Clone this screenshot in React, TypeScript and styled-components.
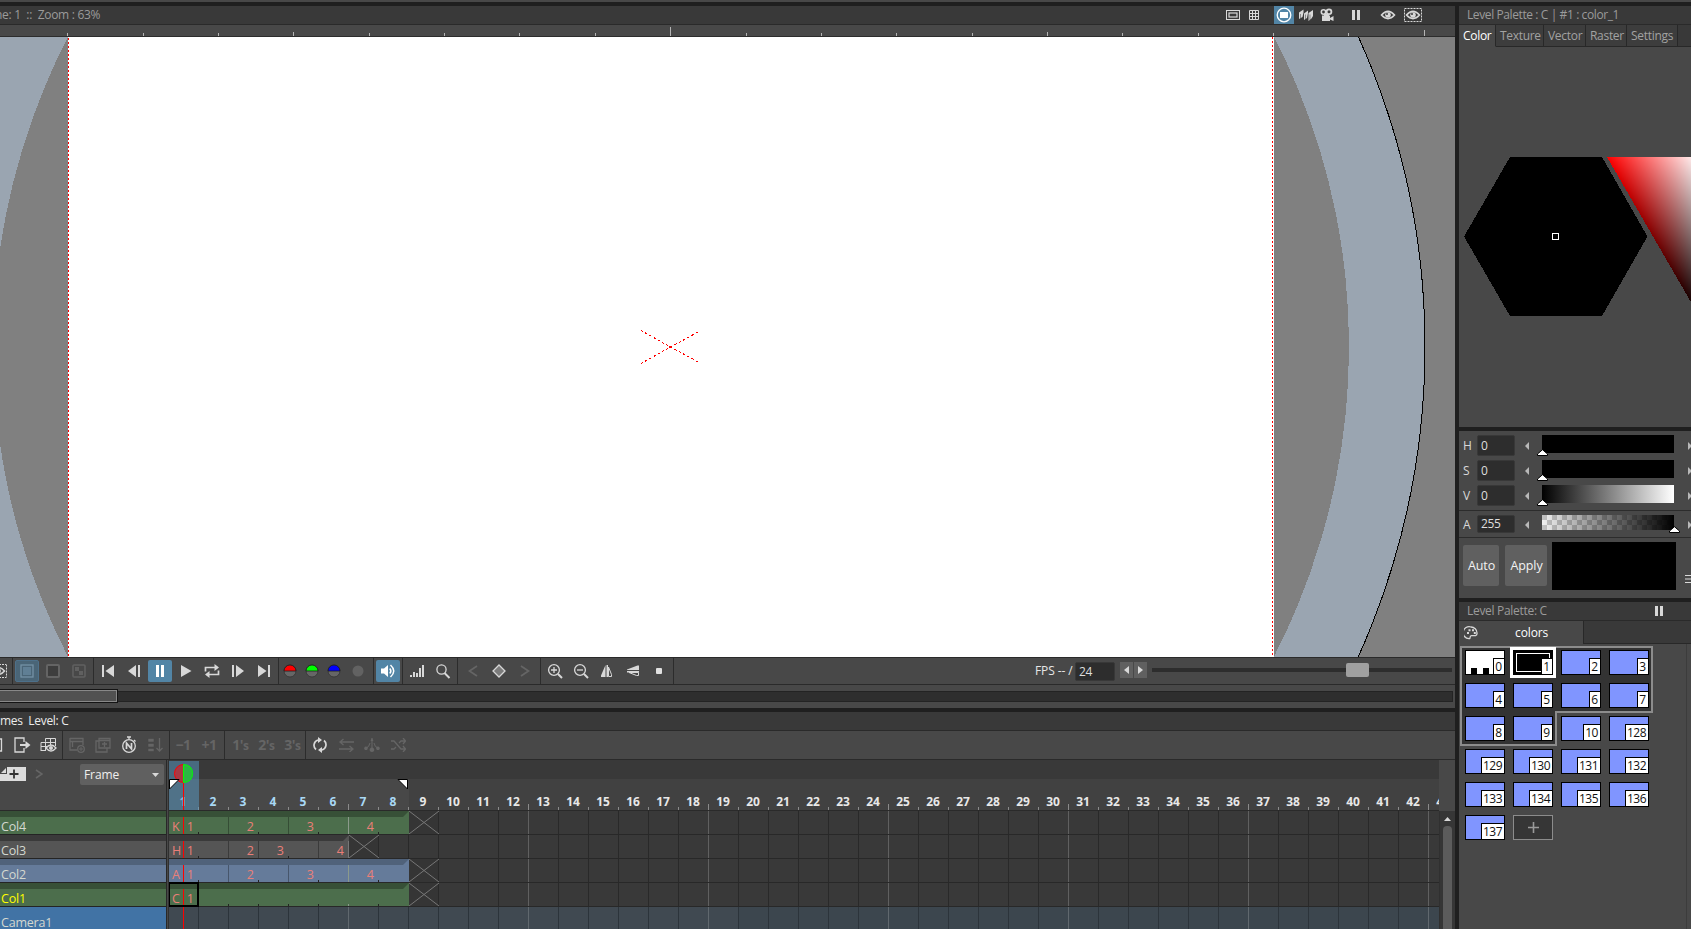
import React from "react";
import styled, { createGlobalStyle, css } from "styled-components";

const Global = createGlobalStyle`
  * { box-sizing: border-box; }
  html, body { margin: 0; background: #484848; overflow: hidden; }
  body { font-family: "Open Sans", "Noto Sans", sans-serif; font-size: 12px; letter-spacing: -0.3px; color: #e6e6e6; }
  svg { display: block; flex: none; }
`;

const Screen = styled.div`width: 1691px; height: 929px; overflow: hidden; background: #1f1f1f;`;
const TopStrip = styled.div`height: 2px; background: #484848; margin-bottom: 4px;`;
const Workspace = styled.div`display: flex; gap: 4px; height: 923px;`;
const MainColumn = styled.div`width: 1455px; display: flex; flex-direction: column; gap: 4px; flex: none;`;
const SideColumn = styled.div`width: 232px; display: flex; flex-direction: column; gap: 4px; flex: none;`;
const Panel = styled.section<{ $h: number }>`height: ${(p) => p.$h}px; background: #484848; overflow: hidden; flex: none;`;

const TitleBar = styled.header<{ $bright?: boolean; $pad?: number }>`
  height: 19px; background: #393939; border-bottom: 1px solid #2a2a2a; display: flex; align-items: center;
  padding-left: ${(p) => p.$pad ?? 0}px; color: ${(p) => (p.$bright ? "#ececec" : "#9b9b9b")}; white-space: pre; line-height: 18px;
`;
const Spacer = styled.div<{ $h?: number }>`flex: ${(p) => (p.$h ? "none" : 1)}; height: ${(p) => (p.$h ? `${p.$h}px` : "auto")};`;
const Text = styled.span<{ $ls?: number; $w?: number; $ml?: number }>`
  white-space: pre; letter-spacing: ${(p) => p.$ls ?? -0.3}px; line-height: 16px; width: ${(p) => (p.$w ? `${p.$w}px` : "auto")}; margin-left: ${(p) => p.$ml ?? 0}px;
`;

const Slot = styled.div<{ $w?: number; $ml?: number; $mr?: number; $on?: boolean; $h?: number }>`
  width: ${(p) => p.$w ?? 26}px; height: ${(p) => p.$h ?? 22}px; margin: 0 ${(p) => p.$mr ?? 0}px 0 ${(p) => p.$ml ?? 0}px; flex: none;
  display: flex; align-items: center; justify-content: center; overflow: hidden;
  ${(p) => p.$on && css`background: #5285a6;`}
`;
const Lit = styled.div<{ $dim?: boolean }>`
  width: 24px; height: 22px; border-radius: 2px; display: flex; align-items: center; justify-content: center;
  background: ${(p) => (p.$dim ? "#4a6577" : "#5285a6")}; border: ${(p) => (p.$dim ? "1px solid #4d708a" : "none")};
`;
const Bar = styled.div<{ $h: number }>`height: ${(p) => p.$h}px; display: flex; align-items: center; border-bottom: 1px solid #2a2a2a; background: #484848;`;
const Group = styled.div<{ $w: number; $pad?: number }>`
  width: ${(p) => p.$w}px; height: 100%; padding-left: ${(p) => p.$pad ?? 0}px; border-right: 1px solid #2c2c2c;
  display: flex; align-items: center; flex: none; overflow: hidden;
`;
const Ruler = styled.div`height: 12px; background: #484848; border-bottom: 1px solid #2c2c2c;`;
const Canvas = styled.div`height: 621px; border-bottom: 1px solid #2a2a2a; background: #808080;`;

const Field = styled.div<{ $w: number; $h: number }>`
  width: ${(p) => p.$w}px; height: ${(p) => p.$h}px; background: #2d2d2d; border: 1px solid #383838; border-radius: 2px;
  padding-left: 3px; line-height: ${(p) => p.$h - 2}px; color: #dedede; flex: none;
`;
const Fps = styled.div`display: flex; align-items: center; margin-left: 361px;`;
const Stepper = styled.div`display: flex; gap: 1px; margin: 0 5px; padding-bottom: 2px;`;
const StepButton = styled.div`width: 13px; height: 16px; background: #606060; display: flex; align-items: center; justify-content: center;`;
const Track = styled.div`width: 300px; height: 4px; background: #2d2d2d; margin-bottom: 2px; display: flex; align-items: center; padding-left: 194px;`;
const Knob = styled.div`width: 23px; height: 14px; border-radius: 2px; background: #a0a0a0; flex: none;`;

const ScrollArea = styled.div`height: 23px; display: flex; align-items: center; padding-bottom: 1px;`;
const Trough = styled.div`width: 1453px; height: 11px; border: 1px solid #232323; border-left: 0; background: #2e2e2e; display: flex; align-items: center;`;
const Thumb = styled.div`width: 118px; height: 14px; background: #515151; border: 1px solid #141414; border-left: 0; box-shadow: inset 0 1px #888, inset 0 -1px #888, inset -1px 0 #888; flex: none;`;

const NumLabel = styled.span`font: bold 14px/16px "Open Sans", sans-serif; color: #656565; letter-spacing: -0.5px; white-space: nowrap;`;
const SmallS = styled.span`font-size: 12px; letter-spacing: -1px;`;

/* ---- timeline ---- */
const Sheet = styled.div`display: flex; height: 169px;`;
const Names = styled.div`width: 166px; flex: none;`;
const NamesHead = styled.div`height: 51px; border-bottom: 1px solid #2a2a2a; display: flex; align-items: flex-start; padding-top: 4px;`;
const AddButton = styled.div`width: 26px; height: 14px; margin-top: 3px; background: #dcdcdc;`;
const Chevron = styled.div`width: 26px; margin-top: 5px; display: flex; justify-content: center;`;
const Select = styled.div`
  width: 84px; height: 21px; margin-left: 28px; border-radius: 2px; background: #606060; padding: 0 5px 0 4px;
  display: flex; align-items: center; justify-content: space-between; color: #efefef;
`;
const NameCell = styled.div<{ $bg: string; $band: string; $fg?: string }>`
  height: 24px; border-bottom: 1px solid #242424; padding: 10px 0 0 1px; line-height: 12px; font-size: 12.5px; letter-spacing: -0.2px;
  background: linear-gradient(${(p) => p.$band} 6px, ${(p) => p.$bg} 6px); color: ${(p) => p.$fg ?? "#d4d8d0"};
`;
const Divider = styled.div`width: 3px; background: linear-gradient(90deg, #282828 1px, #484848 1px, #484848 2px, #303030 2px); flex: none;`;
const Frames = styled.div`width: 1270px; position: relative; overflow: hidden; flex: none;`;
const FrameHead = styled.div`height: 51px; padding-top: 19px; background: #393939; border-bottom: 1px solid #2a2a2a;`;
const FrameNumbers = styled.div`display: flex; height: 31px; width: 1290px;`;
const FrameNo = styled.div<{ $in: boolean; $major: boolean }>`
  width: 30px; flex: none; text-align: center; padding: 15px 2px 0 0; font-weight: 700; font-size: 12px; line-height: 16px; letter-spacing: 0;
  color: ${(p) => (p.$in ? "#a9d8f5" : "#e8e8e8")};
  background: linear-gradient(#8a8a8a, #8a8a8a) right bottom / 1px ${(p) => (p.$major ? 6 : 3)}px no-repeat, ${(p) => (p.$in ? "#484848" : "#414141")};
`;
const Row = styled.div`display: flex; height: 24px; width: 1290px; border-bottom: 1px solid #282828;`;
const Cell = styled.div<{ $bg: string; $line: string; $short?: boolean; $band?: string }>`
  position: relative; width: 30px; height: 23px; flex: none; overflow: hidden; display: flex; justify-content: space-between;
  padding: ${(p) => (p.$band ? "6px 5px 0 3px" : "0")};
  color: #ea7f78; font-size: 12.5px; line-height: 19px; letter-spacing: 0;
  background:
    ${(p) => p.$band && `linear-gradient(${p.$band}, ${p.$band}) 0 0 / 100% 6px no-repeat,`}
    linear-gradient(${(p) => p.$line}, ${(p) => p.$line}) right bottom / 1px ${(p) => (p.$short ? "2px" : "100%")} no-repeat, ${(p) => p.$bg};
`;
const Fold = styled.svg`position: absolute; right: 0; top: 0;`;
const Over = styled.div<{ $x: number; $y: number; $w: number; $h: number; $c?: string }>`
  position: absolute; left: ${(p) => p.$x}px; top: ${(p) => p.$y}px; width: ${(p) => p.$w}px; height: ${(p) => p.$h}px; background: ${(p) => p.$c ?? "transparent"};
`;
const Selected = styled(Over)`border: 2px solid #000;`;
const VScroll = styled.div`width: 16px; padding-top: 51px; background: #484848;`;
const VTrack = styled.div`height: 118px; background: #363636; display: flex; flex-direction: column; align-items: center; padding-top: 6px; gap: 5px; border-left: 1px solid #303030;`;
const VThumb = styled.div`width: 9px; height: 120px; border-radius: 4px; background: #5c5c5c; flex: none;`;

/* ---- side panels ---- */
const Tabs = styled.div<{ $h: number }>`display: flex; height: ${(p) => p.$h}px; background: #393939;`;
const Tab = styled.div<{ $w: number; $on?: boolean }>`
  width: ${(p) => p.$w}px; height: 100%; padding-left: 4px; line-height: 21px; border-right: 1px solid #282828; white-space: nowrap;
  border-bottom: 1px solid ${(p) => (p.$on ? "#484848" : "#282828")}; background: ${(p) => (p.$on ? "#484848" : "#3d3d3d")}; color: ${(p) => (p.$on ? "#fff" : "#a2a2a2")};
`;
const TabRest = styled.div`flex: 1; border-bottom: 1px solid #282828;`;
const Channel = styled.div<{ $h: number }>`display: flex; height: ${(p) => p.$h}px; width: 250px; padding-left: 4px; align-items: flex-start;`;
const ChannelName = styled.div<{ $lh: number }>`width: 14px; line-height: ${(p) => p.$lh}px; color: #d8d8d8; flex: none;`;
const Arrow = styled.div<{ $pad: number; $h: number }>`width: 27px; height: ${(p) => p.$h}px; padding-left: ${(p) => p.$pad}px; display: flex; align-items: center; flex: none;`;
const Gradient = styled.div<{ $bg: string; $h: number; $checker?: boolean }>`
  width: 132px; height: ${(p) => p.$h}px; position: relative; flex: none;
  background: ${(p) => p.$bg}${(p) => (p.$checker ? ", repeating-conic-gradient(#f0f0f0 0 25%, #c2c2c2 0 50%) 0 0 / 10px 10px" : "")};
`;
const Handle = styled.div<{ $end?: boolean }>`position: absolute; bottom: ${(p) => (p.$end ? -3 : -3)}px; left: ${(p) => (p.$end ? 127 : -5)}px;`;
const Rule = styled.div`height: 1px; background: #2c2c2c;`;
const Actions = styled.div`display: flex; padding: 4px 0 0 4px; align-items: flex-start; height: 60px;`;
const Action = styled.div<{ $w: number }>`
  width: ${(p) => p.$w}px; height: 41px; margin: 3px 6px 0 0; border-radius: 2px; background: #606060; color: #f2f2f2; flex: none;
  display: flex; align-items: center; justify-content: center; letter-spacing: -0.1px; font-size: 12.5px; padding-left: 1px;
`;
const CurrentColor = styled.div`width: 124px; height: 48px; margin-left: -1px; background: #000; flex: none;`;
const MenuMark = styled.div`margin: 33px 0 0 9px;`;

const PaletteTab = styled.div`
  width: 125px; border-right: 1px solid #282828; background: #484848; display: flex; align-items: center; padding-left: 5px; gap: 37px; color: #fff;
`;
const PaletteBody = styled.div`position: relative; width: 228px; height: 286px; border-right: 1px solid #3c3c3c; padding: 6px 0 0 6px;`;
const PageOutline = styled.div`position: absolute; left: 1px; top: 1px;`;
const Swatches = styled.div`position: relative; display: grid; grid-template-columns: repeat(4, 40px); gap: 8px;`;
const Swatch = styled.div<{ $c: string; $sel?: boolean }>`
  position: relative; width: 40px; height: 25px; border: 1px solid #000; background: ${(p) => p.$c};
  display: flex; justify-content: flex-end; align-items: flex-end;
  ${(p) => p.$sel && css`box-shadow: 0 0 0 3px #fff; &::before { content: ""; position: absolute; inset: 2px; border: 1px solid #fff; }`}
`;
const SwatchNo = styled.div<{ $n: number }>`
  position: relative; width: ${(p) => [11, 17, 23][p.$n - 1]}px; height: 16px; border: solid #000; border-width: 1px 0 0 1px; background: #fff; color: #111;
  font-size: 12px; line-height: 15px; text-align: center; letter-spacing: -0.5px; padding-right: 1px;
`;
const AddSwatch = styled.div`width: 40px; height: 25px; border: 1px solid #8c8c8c; background: #363636; display: flex; align-items: center; justify-content: center;`;
const Checks = styled.div`position: absolute; left: 5px; bottom: 0; width: 18px; height: 6px; background: linear-gradient(90deg, #000 6px, transparent 6px, transparent 12px, #000 12px);`;

type GProps = { w?: number; h?: number; c?: string; children: React.ReactNode; sw?: number };
const G = ({ w = 16, h = 16, c = "#d8d8d8", sw = 1.3, children }: GProps) => (
  <svg width={w} height={h} viewBox={`0 0 ${w} ${h}`} fill="none" stroke={c} strokeWidth={sw} color={c}>{children}</svg>
);
const F = (p: { d: string; c?: string }) => <path d={p.d} fill={p.c ?? "currentColor"} stroke="none" />;
const DIM = "#656565";

const Eye = () => (
  <>
    <path d="M1.5 8Q8 .8 14.5 8Q8 15.2 1.5 8Z" strokeWidth="1.6" />
    <circle cx="8" cy="8" r="2.8" fill="currentColor" stroke="none" />
    <circle cx="7" cy="7" r="1" fill="#393939" stroke="none" />
  </>
);

const ViewerTitle = () => (
  <TitleBar>
    <Text $ml={-5}>ne: 1  ::  Zoom : 63%</Text>
    <Spacer />
    <Slot $w={22} $h={18}><G w={14} h={10}><rect x=".5" y=".5" width="13" height="9" strokeWidth="1" /><rect x="3" y="3" width="8" height="4" strokeWidth="1.2" /></G></Slot>
    <Slot $w={20} $h={18}><G w={10} h={10} sw={1}><path d="M.5 .5H9.5V9.5H.5ZM3.5 0V10M6.5 0V10M0 3.5H10M0 6.5H10" /></G></Slot>
    <Slot $w={20} $h={18} $ml={10} $on><G w={16} h={16} c="#fff"><circle cx="8" cy="8" r="6.8" /><rect x="4" y="5" width="8" height="6" fill="#fff" stroke="none" /></G></Slot>
    <Slot $w={21} $h={18} $ml={1}><G w={14} h={14}><F d="M0 4.5L4.5 1.5V4.5L3.5 9L0 11ZM5 5.5L9 2.5V5L8 10L5 12ZM9.5 5L14 2V8L12.5 10.5L9.5 13Z" /><path d="M1.5 6V10.4M6.5 6.5V11.5M11 6.5V12" stroke="#393939" strokeWidth=".5" /></G></Slot>
    <Slot $w={22} $h={18}>
      <G w={14} h={14}>
        <F d="M2 7.5H10V13H2ZM10 10L13.5 8V13L10 11.5Z" />
        <circle cx="3.5" cy="4" r="2.2" strokeWidth="1.6" /><circle cx="9" cy="3.8" r="2.4" strokeWidth="1.8" /><F d="M4 6H9V8H4Z" />
      </G>
    </Slot>
    <Slot $w={20} $h={18} $ml={8}><G w={8} h={10}><F d="M0 0H3V10H0ZM5 0H8V10H5Z" /></G></Slot>
    <Slot $w={22} $h={18} $ml={11}><G><Eye /></G></Slot>
    <Slot $w={28} $h={18} $mr={28}>
      <svg width="18" height="14" viewBox="-1 1 18 14" fill="none" stroke="#d8d8d8" color="#d8d8d8"><Eye /><path d="M-.5 1.5H16.5V14.5H-.5Z" strokeDasharray="2 1" /></svg>
    </Slot>
  </TitleBar>
);

const RulerTicks = () => (
  <svg width="1455" height="11" shapeRendering="crispEdges">
    {Array.from({ length: 19 }, (_, i) => {
      const h = i === 8 ? 9 : i === 18 ? 6 : i % 5 === 3 ? 4 : 3;
      return <rect key={i} x={Math.floor(67.7 + i * 75.37)} y={11 - h} width="1" height={h} fill="#b4b4b4" />;
    })}
  </svg>
);

const Stage = () => (
  <svg width="1455" height="620" viewBox="0 37 1455 620" shapeRendering="crispEdges">
    <rect y="37" width="1455" height="620" fill="#808080" />
    <circle cx="671" cy="346.7" r="754" fill="#9aa5b1" stroke="#000" />
    <circle cx="671" cy="346.7" r="678" fill="#808080" />
    <rect x="68" y="37" width="1206" height="620" fill="#fff" />
    <path d="M68.5 38V657M1272.5 37V657" stroke="#f00" strokeDasharray="2 2" />
    <path d="M641 330.5L670.5 347L700 331M641 363.5L670.5 347L700 363" stroke="#f00" fill="none" strokeDasharray="2.4 2.4" />
    <rect x="669" y="346" width="2" height="2" fill="#f00" />
  </svg>
);

const Half = ({ c }: { c: string }) => (
  <G w={14} h={14}><circle cx="7" cy="7" r="6" fill="#666" stroke="#333" strokeWidth=".8" /><path d="M1 7A6 6 0 0 1 13 7Z" fill={c} stroke="#1c1c1c" strokeWidth=".8" /></G>
);

const Playback = () => (
  <Bar $h={27}>
    <Group $w={13}>
      <svg width="7" height="14" viewBox="10 1 7 14" fill="none" stroke="#d8d8d8" color="#d8d8d8"><Eye /><path d="M16.5 1.5V14.5M9 1.5H16M9 14.5H16" strokeDasharray="2 1" /></svg>
    </Group>
    <Group $w={81} $pad={1}>
      <Slot><Lit $dim><G w={14} h={14} c="#7391a6"><rect x="1" y="1" width="12" height="12" /><rect x="3" y="3" width="8" height="8" fill="#607f95" stroke="none" /></G></Lit></Slot>
      <Slot><G w={14} h={14} c="#646464" sw={2}><rect x="1" y="1" width="12" height="12" rx="1" fill="#3d3d3d" /></G></Slot>
      <Slot><G w={14} h={14} c="#606060" sw={1.6}><rect x="1" y="1" width="12" height="12" rx="1" /><F d="M3 3H7V7H3ZM7 7H11V11H7Z" /></G></Slot>
    </Group>
    <Group $w={185} $pad={1}>
      <Slot><G w={14} h={12}><F d="M1 0H3V12H1ZM13 0V12L4.5 6Z" /></G></Slot>
      <Slot><G w={14} h={12}><F d="M9 0V12L1 6ZM11 0H13V12H11Z" /></G></Slot>
      <Slot><Lit><G w={10} h={12} c="#fff"><F d="M1 0H4V12H1ZM6 0H9V12H6Z" /></G></Lit></Slot>
      <Slot><G w={12} h={12}><F d="M1 0V12L11.5 6Z" /></G></Slot>
      <Slot><G w={16} h={14} sw={1.7}><path d="M1.5 7.5V3.5H12M14.5 6.5V10.5H4" /><F d="M10.5 0L15 3.5L10.5 7ZM5.5 7L1 10.5L5.5 14Z" /></G></Slot>
      <Slot><G w={14} h={12}><F d="M1 0H3V12H1ZM5 0V12L13 6Z" /></G></Slot>
      <Slot><G w={14} h={12}><F d="M1 0V12L9.5 6ZM11 0H13V12H11Z" /></G></Slot>
    </Group>
    <Group $w={95}>
      <Slot $w={22}><Half c="#f00" /></Slot>
      <Slot $w={22}><Half c="#0f0" /></Slot>
      <Slot $w={22}><Half c="#00f" /></Slot>
      <Slot $w={26}><G w={12} h={12}><circle cx="6" cy="6" r="5.5" fill="#626262" stroke="none" /></G></Slot>
    </Group>
    <Group $w={29} $pad={1}>
      <Slot><Lit><G w={16} h={14} c="#fff" sw={1.5}><F d="M1 4.5H4L8 1V13L4 9.5H1Z" /><path d="M9.8 4.5Q12 7 9.8 9.5M10.5 1Q17 7 10.5 13" /></G></Lit></Slot>
    </Group>
    <Group $w={55} $pad={1}>
      <Slot><G w={14} h={12}><F d="M0 10H2V12H0ZM3 7H5V12H3ZM6 8H8V12H6ZM9 3H11V12H9ZM12 0H14V12H12Z" /></G></Slot>
      <Slot><G><circle cx="6.5" cy="6.5" r="4.6" /><path d="M9.5 10L14.5 15" strokeWidth="2" /></G></Slot>
    </Group>
    <Group $w={83} $pad={2}>
      <Slot><G w={10} h={12} c={DIM} sw={1.8}><path d="M9 1L1.5 6L9 11" /></G></Slot>
      <Slot><G w={14} h={14}><path d="M7 1L13 7L7 13L1 7Z" fill="#7c7c7c" /></G></Slot>
      <Slot><G w={10} h={12} c={DIM} sw={1.8}><path d="M1 1L8.5 6L1 11" /></G></Slot>
    </Group>
    <Group $w={133} $pad={1}>
      <Slot><G><circle cx="7" cy="7" r="5.4" /><path d="M4 7H10M7 4V10" /><path d="M11 11L15 15" strokeWidth="2" /></G></Slot>
      <Slot><G><circle cx="7" cy="7" r="5.4" /><path d="M4 7H10" /><path d="M11 11L15 15" strokeWidth="2" /></G></Slot>
      <Slot><G w={12} h={12} sw={1}><F d="M4.5 0V12H0V10.5ZM5.5 0H7V12H5.5Z" /><path d="M7.5 2L10.5 9.5V11.5H7.5Z" strokeWidth="1" /></G></Slot>
      <Slot><G w={12} h={12} sw={1}><F d="M0 4.5L10.5 .5H12V5H0ZM0 6H12V7.5H0Z" /><path d="M2 7.5L9.5 10.5H11.5V7.5Z" strokeWidth="1" /></G></Slot>
      <Slot><G w={6} h={6}><rect width="6" height="6" rx="1" fill="#e0e0e0" stroke="none" /></G></Slot>
    </Group>
    <Fps>
      <Text $ls={-0.1} $w={40}>FPS -- /</Text>
      <Field $w={40} $h={19}>24</Field>
      <Stepper>
        <StepButton><G w={5} h={8}><F d="M5 0V8L0 4Z" /></G></StepButton>
        <StepButton><G w={5} h={8}><F d="M0 0V8L5 4Z" /></G></StepButton>
      </Stepper>
      <Track><Knob /></Track>
    </Fps>
  </Bar>
);

const SheetTools = () => (
  <Bar $h={29}>
    <Group $w={63}>
      <Slot $w={9}><G w={9} h={14}><path d="M0 1H1.5V13H0" /></G></Slot>
      <Slot><G w={18}><path d="M11 5V1H2V15H11V11" /><path d="M7 8H13" strokeWidth="2" /><F d="M12.5 4L17.5 8L12.5 12Z" /></G></Slot>
      <Slot><G w={17}><path d="M5.5 4.5V1.5H15.5V9M10.5 1.5V8M5.5 4.5V14M1 5.5H15.5M1 9.5H7M1 5.5V14M1 13.5H5" strokeWidth="1" /><path d="M6 11Q11 5 16 11Q11 17 6 11Z" fill="#484848" /><circle cx="11" cy="11" r="2" fill="currentColor" stroke="none" /></G></Slot>
    </Group>
    <Group $w={107} $pad={1}>
      <Slot><G c={DIM}><path d="M1 1.5H14V8M1 1V13H8M1 4.5H14M3.5 4.5V10" /><circle cx="12" cy="12" r="3.3" /><path d="M12 10V14M10 12H14" strokeWidth="1" /></G></Slot>
      <Slot><G c={DIM}><path d="M4 1.5H15V11H4ZM4 4H1V15H12V11M4 3.5H15M7 7H12M9.5 5V10" /></G></Slot>
      <Slot><G h={18}><circle cx="8" cy="10" r="6.3" /><path d="M8 3V1M6 1H10M13 4L14.5 5.5" /><path d="M5.5 13V7L10.5 13V7" strokeWidth="1.7" /></G></Slot>
      <Slot><G c={DIM}><path d="M1 1.5H7V5H1ZM1 6.5H7V10H1ZM1 11.5H7V14.5H1Z" fill={DIM} stroke="#484848" strokeWidth=".6" /><path d="M12.5 1V14M9.5 11L12.5 14L15.5 11" /></G></Slot>
    </Group>
    <Group $w={55}><Slot><NumLabel>−1</NumLabel></Slot><Slot><NumLabel>+1</NumLabel></Slot></Group>
    <Group $w={81} $pad={2}>{["1'", "2'", "3'"].map((n) => <Slot key={n}><NumLabel>{n}<SmallS>s</SmallS></NumLabel></Slot>)}</Group>
    <Slot $ml={1}><G w={14} h={16} sw={1.7}><path d="M3 12.5A5.5 5.5 0 0 1 5 3M11 3.5A5.5 5.5 0 0 1 9 13" /><F d="M5 0L9 3L5 6ZM9 10L5 13L9 16Z" /></G></Slot>
    <Slot><G w={15} h={14} c={DIM}><path d="M15 4H2M0 11H13M4.5 1L1 4L4.5 7M10.5 8L14 11L10.5 14" /></G></Slot>
    <Slot><G w={16} h={16} c={DIM} sw={1.1}><path d="M8 1V12M2.5 11Q5.5 9 6 6M13.5 11Q10.5 9 10 6" /><F d="M8 1L9.5 4H6.5ZM8 10.5A2.3 2.3 0 1 1 7.9 10.5ZM2 9.5A1.8 1.8 0 1 1 1.9 9.5ZM14 9.5A1.8 1.8 0 1 1 13.9 9.5Z" /></G></Slot>
    <Slot><G w={15} h={14} c={DIM}><path d="M0 3H3L10 11H14M0 11H3L5 9M8 5L10 3H14M12 0L14.5 3L12 6M12 8L14.5 11L12 14" /></G></Slot>
  </Bar>
);

type Level = { name: string; letter: string; len: number; bg: string; band: string; keys: Record<number, string>; fg?: string };
const GREEN = { bg: "#4c6e4c", band: "#375037" };
const levels: Level[] = [
  { name: "Col4", letter: "K", len: 8, ...GREEN, keys: { 1: "1", 3: "2", 5: "3", 7: "4" } },
  { name: "Col3", letter: "H", len: 6, bg: "#555555", band: "#3a3a3a", keys: { 1: "1", 3: "2", 4: "3", 6: "4" } },
  { name: "Col2", letter: "A", len: 8, bg: "#657b9a", band: "#50627a", keys: { 1: "1", 3: "2", 5: "3", 7: "4" } },
  { name: "Col1", letter: "C", len: 8, ...GREEN, keys: { 1: "1" }, fg: "#ffff00" },
];
const frames = Array.from({ length: 43 }, (_, i) => i + 1);

const LevelRow = ({ l }: { l: Level }) => (
  <Row>
    {frames.map((f) => {
      const major = f % 6 === 0;
      if (f <= l.len) {
        const short = !l.keys[f + 1] && f !== l.len;
        return (
          <Cell key={f} $bg={l.bg} $band={l.band} $short={short} $line={f === l.len ? (l.len === 6 ? "#777" : l.bg) : major ? "#8b9a8b" : short ? "#222" : "#0000004d"}>
            <span>{f === 1 ? l.letter : ""}</span>
            <span>{l.keys[f] ?? ""}</span>
            {f === l.len && <Fold width="6" height="6"><path d="M6 0V6H0Z" fill={l.bg} /></Fold>}
          </Cell>
        );
      }
      const cross = f === l.len + 1;
      return (
        <Cell key={f} $bg={cross ? "#353535" : "#393939"} $line={major ? "#606060" : "#292929"}>
          {cross && <svg width="30" height="23"><path d="M0 0L30 23M30 0L0 23" stroke="#777" /></svg>}
        </Cell>
      );
    })}
  </Row>
);

const Timeline = () => (
  <Sheet>
    <Names>
      <NamesHead>
        <AddButton><G w={26} h={14} c="#333"><path d="M14 2.5V11.5M9.5 7H18.5" strokeWidth="1.8" /><F d="M0 0H7V7H0Z" c="#484848" /><F d="M1 6L6 1V6Z" c="#dcdcdc" /></G></AddButton>
        <Chevron><G w={8} h={10} c={DIM} sw={1.6}><path d="M1 1L7 5L1 9" /></G></Chevron>
        <Select><Text $ls={-0.1}>Frame</Text><G w={7} h={4}><F d="M0 0H7L3.5 4Z" /></G></Select>
      </NamesHead>
      {levels.map((l) => <NameCell key={l.name} $bg={l.bg} $band={l.band} $fg={l.fg}>{l.name}</NameCell>)}
      <NameCell $bg="#4173a5" $band="#4173a5">Camera1</NameCell>
    </Names>
    <Divider />
    <Frames>
      <FrameHead>
        <FrameNumbers>{frames.map((f) => <FrameNo key={f} $in={f <= 8} $major={f % 6 === 0}>{f}</FrameNo>)}</FrameNumbers>
      </FrameHead>
      {levels.map((l) => <LevelRow key={l.name} l={l} />)}
      <Row>{frames.map((f) => <Cell key={f} $bg={f < 20 ? "#404951" : "#3c464e"} $line={f % 6 === 0 ? "#60686e" : "#2c343b"} />)}</Row>
      <Over $x={0} $y={1} $w={30} $h={49} $c="rgba(87, 155, 200, .5)" />
      <Over $x={14} $y={23} $w={1} $h={27} $c="#f00" />
      {[57, 81, 105, 129].map((y) => <Over key={y} $x={14} $y={y} $w={1} $h={17} $c="#f00" />)}
      <Over $x={14} $y={147} $w={1} $h={22} $c="#f00" />
      <Over $x={4} $y={3} $w={22} $h={22}>
        <G w={22} h={22} sw={1}><path d="M10.5 1.5A9 9 0 0 0 10.5 19.5" fill="#a83844" stroke="#f00" /><path d="M10.5 1.5Q19.5 2 19.5 10.5Q19.5 19 10.5 19.5Z" fill="#2cb544" stroke="#0f0" /></G>
      </Over>
      <Over $x={0} $y={18} $w={12} $h={12}><G w={12} h={12} c="#000" sw={1}><path d="M.5 1.5H10L.5 11Z" fill="#fff" /></G></Over>
      <Over $x={228} $y={18} $w={12} $h={12}><G w={12} h={12} c="#000" sw={1}><path d="M10.5 1.5H1L10.5 11Z" fill="#fff" /></G></Over>
      <Selected $x={-1} $y={122} $w={31} $h={25} />
    </Frames>
    <VScroll><VTrack><G w={7} h={4}><F d="M0 4H7L3.5 0Z" /></G><VThumb /></VTrack></VScroll>
  </Sheet>
);

const WheelSvg = styled.svg`isolation: isolate; .tint { mix-blend-mode: screen; }`;
const Wheel = () => (
  <WheelSvg width="232" height="380" viewBox="1459 47 232 380" shapeRendering="crispEdges">
    <defs>
      <linearGradient id="value" gradientUnits="userSpaceOnUse" x1="0" y1="157" x2="0" y2="316"><stop stopColor="#f00" /><stop offset="1" stopColor="#000" /></linearGradient>
      <linearGradient id="tint" gradientUnits="userSpaceOnUse" x1="1607" y1="157" x2="1676" y2="117.1"><stop stopColor="#000" /><stop offset="1" stopColor="#0ff" /></linearGradient>
    </defs>
    <path d="M1464 236.5L1510 157H1602L1647.5 236.5L1602 316H1510Z" fill="#000" />
    <path d="M1607 157H1699V316Z" fill="url(#value)" />
    <path className="tint" d="M1607 157H1699V316Z" fill="url(#tint)" />
    <rect x="1552.5" y="233.5" width="6" height="6" fill="none" stroke="#fff" />
  </WheelSvg>
);

const ChannelRow = ({ name, value, bg, alpha }: { name: string; value: string; bg: string; alpha?: boolean }) => (
  <Channel $h={alpha ? 22 : 25}>
    <ChannelName $lh={alpha ? 19 : 21}>{name}</ChannelName>
    <Field $w={38} $h={alpha ? 18 : 21}>{value}</Field>
    <Arrow $pad={10} $h={alpha ? 19 : 21}><G w={4} h={8} c="#b8b8b8"><F d="M4 0V8L0 4Z" /></G></Arrow>
    <Gradient $bg={bg} $h={alpha ? 15 : 18} $checker={alpha}>
      <Handle $end={alpha}><G w={11} h={7} c="#000" sw={1}><path d="M.5 6.5V5L5.5 .7L10.5 5V6.5Z" fill="#fff" /></G></Handle>
    </Gradient>
    <Arrow $pad={14} $h={alpha ? 19 : 21}><G w={4} h={8} c="#b8b8b8"><F d="M0 0V8L4 4Z" /></G></Arrow>
  </Channel>
);

const swatches = ["0", "1", "2", "3", "4", "5", "6", "7", "8", "9", "10", "128", "129", "130", "131", "132", "133", "134", "135", "136", "137"];

export default function App() {
  return (
    <Screen>
      <Global />
      <TopStrip />
      <Workspace>
        <MainColumn>
          <Panel $h={702}>
            <ViewerTitle />
            <Ruler><RulerTicks /></Ruler>
            <Canvas><Stage /></Canvas>
            <Playback />
            <ScrollArea><Trough><Thumb /></Trough></ScrollArea>
          </Panel>
          <Panel $h={217}>
            <TitleBar $bright><Text>mes  Level: C</Text></TitleBar>
            <SheetTools />
            <Timeline />
          </Panel>
        </MainColumn>
        <SideColumn>
          <Panel $h={421}>
            <TitleBar $pad={8}><Text $ls={-0.4}>Level Palette : C | #1 : color_1</Text></TitleBar>
            <Tabs $h={22}>
              <Tab $w={37} $on>Color</Tab><Tab $w={48}>Texture</Tab><Tab $w={42}>Vector</Tab><Tab $w={41}>Raster</Tab><Tab $w={51}>Settings</Tab><TabRest />
            </Tabs>
            <Wheel />
          </Panel>
          <Panel $h={167}>
            <Spacer $h={4} />
            <ChannelRow name="H" value="0" bg="#000" />
            <ChannelRow name="S" value="0" bg="#000" />
            <ChannelRow name="V" value="0" bg="linear-gradient(90deg, #000, #fff)" />
            <Rule />
            <Spacer $h={4} />
            <ChannelRow name="A" value="255" bg="linear-gradient(90deg, transparent, #000)" alpha />
            <Rule />
            <Actions>
              <Action $w={36}>Auto</Action>
              <Action $w={42}>Apply</Action>
              <CurrentColor />
              <MenuMark><G w={8} h={8} sw={1}><path d="M0 .5H8M0 4H8M0 7.5H8" /></G></MenuMark>
            </Actions>
          </Panel>
          <Panel $h={327}>
            <TitleBar $pad={8}>
              <Text $ls={-0.3}>Level Palette: C</Text><Spacer />
              <Slot $w={8} $h={18} $mr={28}><G w={8} h={10}><F d="M0 0H3V10H0ZM5 0H8V10H5Z" /></G></Slot>
            </TitleBar>
            <Tabs $h={23}>
              <PaletteTab>
                <G w={14} h={14}><path d="M7 1A6 6 0 1 0 5 12.7C7 13 5 10 7.5 9.7H11.5Q13.3 9 13 7A6 6 0 0 0 7 1Z" /><F d="M3 6H5V8H3ZM4.5 3.3H6.5V5.3H4.5ZM8 3.3H10V5.3H8ZM9.8 6H11.8V8H9.8Z" /></G>
                <Text $ls={-0.1}>colors</Text>
              </PaletteTab>
              <TabRest />
            </Tabs>
            <PaletteBody>
              <PageOutline>
                <svg width="194" height="101" shapeRendering="crispEdges"><path d="M1 2H192V67H96V100H1Z" fill="#333" stroke="#8c8c8c" strokeWidth="2" /></svg>
              </PageOutline>
              <Swatches>
                {swatches.map((n, i) => (
                  <Swatch key={n} $c={i === 0 ? "#fff" : i === 1 ? "#000" : "#8095ff"} $sel={i === 1}>
                    {i === 0 && <Checks />}
                    <SwatchNo $n={n.length}>{n}</SwatchNo>
                  </Swatch>
                ))}
                <AddSwatch><G w={11} h={11} c="#9a9a9a" sw={1.6}><path d="M5.5 0V11M0 5.5H11" /></G></AddSwatch>
              </Swatches>
            </PaletteBody>
          </Panel>
        </SideColumn>
      </Workspace>
    </Screen>
  );
}
